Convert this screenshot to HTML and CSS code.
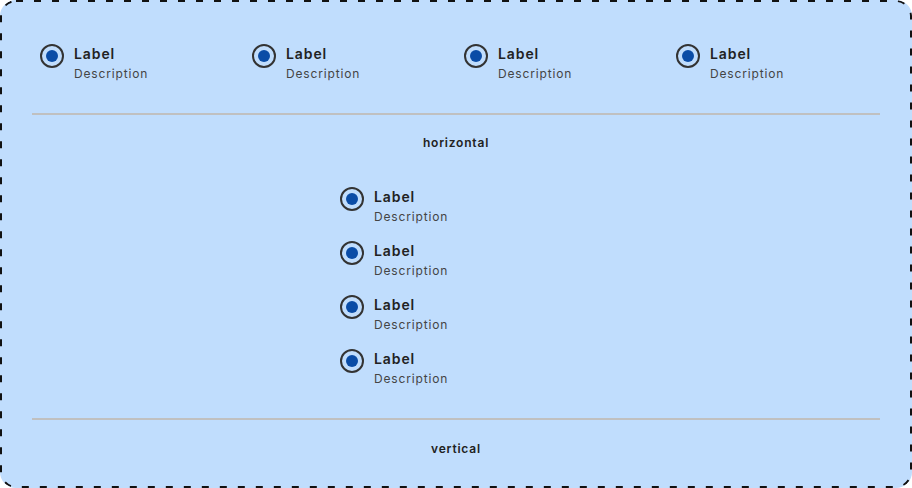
FILE: index.html
```html
<!DOCTYPE html>
<html lang="en">
<head>
    <meta charset="UTF-8">
    <meta name="viewport" content="width=device-width, initial-scale=1.0">
    <title>Radio group orientations</title>
    <link rel="stylesheet" href="styles.css">
</head>
<body>
    <div class="frame">
        <div class="demo">
            <div class="radio-group horizontal">
                <label class="radio">
                    <span class="radio-mark"></span>
                    <span class="radio-text">
                        <span class="radio-label">Label</span>
                        <span class="radio-desc">Description</span>
                    </span>
                </label>
                <label class="radio">
                    <span class="radio-mark"></span>
                    <span class="radio-text">
                        <span class="radio-label">Label</span>
                        <span class="radio-desc">Description</span>
                    </span>
                </label>
                <label class="radio">
                    <span class="radio-mark"></span>
                    <span class="radio-text">
                        <span class="radio-label">Label</span>
                        <span class="radio-desc">Description</span>
                    </span>
                </label>
                <label class="radio">
                    <span class="radio-mark"></span>
                    <span class="radio-text">
                        <span class="radio-label">Label</span>
                        <span class="radio-desc">Description</span>
                    </span>
                </label>
            </div>
            <hr class="divider">
            <div class="caption">horizontal</div>
        </div>
        <div class="demo">
            <div class="radio-group vertical">
                <label class="radio">
                    <span class="radio-mark"></span>
                    <span class="radio-text">
                        <span class="radio-label">Label</span>
                        <span class="radio-desc">Description</span>
                    </span>
                </label>
                <label class="radio">
                    <span class="radio-mark"></span>
                    <span class="radio-text">
                        <span class="radio-label">Label</span>
                        <span class="radio-desc">Description</span>
                    </span>
                </label>
                <label class="radio">
                    <span class="radio-mark"></span>
                    <span class="radio-text">
                        <span class="radio-label">Label</span>
                        <span class="radio-desc">Description</span>
                    </span>
                </label>
                <label class="radio">
                    <span class="radio-mark"></span>
                    <span class="radio-text">
                        <span class="radio-label">Label</span>
                        <span class="radio-desc">Description</span>
                    </span>
                </label>
            </div>
            <hr class="divider">
            <div class="caption">vertical</div>
        </div>
    </div>
</body>
</html>
```

FILE: styles.css
```css
body {
    margin: 0;
    padding: 0;
    font-family: "Inter", "Liberation Sans", sans-serif;
    color: #222;
}
.frame {
    width: 912px;
    height: 488px;
    box-sizing: border-box;
    background-color: #c0ddfd;
    background-image: url("data:image/svg+xml,%3Csvg xmlns='http://www.w3.org/2000/svg' width='912' height='488'%3E%3Crect x='1' y='1' width='910' height='486' rx='15' fill='none' stroke='%23111' stroke-width='2' stroke-dasharray='7 11'/%3E%3C/svg%3E");
    border-radius: 16px;
    padding: 44px 32px 32px;
    display: flex;
    flex-direction: column;
    gap: 36px;
}
.demo {
    display: flex;
    flex-direction: column;
}
.radio-group {
    display: flex;
}
.radio-group.horizontal {
    padding-left: 8px;
}
.radio-group.horizontal .radio {
    width: 212px;
    flex-shrink: 0;
}
.radio-group.vertical {
    flex-direction: column;
    gap: 14px;
    width: 232px;
    margin: 0 auto;
}
.radio {
    display: flex;
    gap: 10px;
    cursor: pointer;
}
.radio-mark {
    width: 24px;
    height: 24px;
    box-sizing: border-box;
    border: 2px solid #333;
    border-radius: 50%;
    display: flex;
    align-items: center;
    justify-content: center;
    flex-shrink: 0;
}
.radio-mark::after {
    content: "";
    width: 12px;
    height: 12px;
    border-radius: 50%;
    background: #0a4ca6;
}
.radio-text {
    display: flex;
    flex-direction: column;
}
.radio-label {
    font-size: 14px;
    font-weight: 600;
    line-height: 20px;
    color: #222;
    letter-spacing: 0.9px;
}
.radio-desc {
    font-size: 12px;
    line-height: 20px;
    color: #444;
    letter-spacing: 0.85px;
}
.divider {
    border: none;
    height: 2px;
    background: #c0c0c0;
    margin: 29px 0 0;
}
.demo:last-child .divider {
    margin-top: 29px;
}
.caption {
    margin-top: 20px;
    font-size: 12px;
    font-weight: 600;
    line-height: 16px;
    text-align: center;
    color: #222;
    letter-spacing: 0.8px;
}
.demo:last-child .caption {
    margin-top: 21px;
}
```
